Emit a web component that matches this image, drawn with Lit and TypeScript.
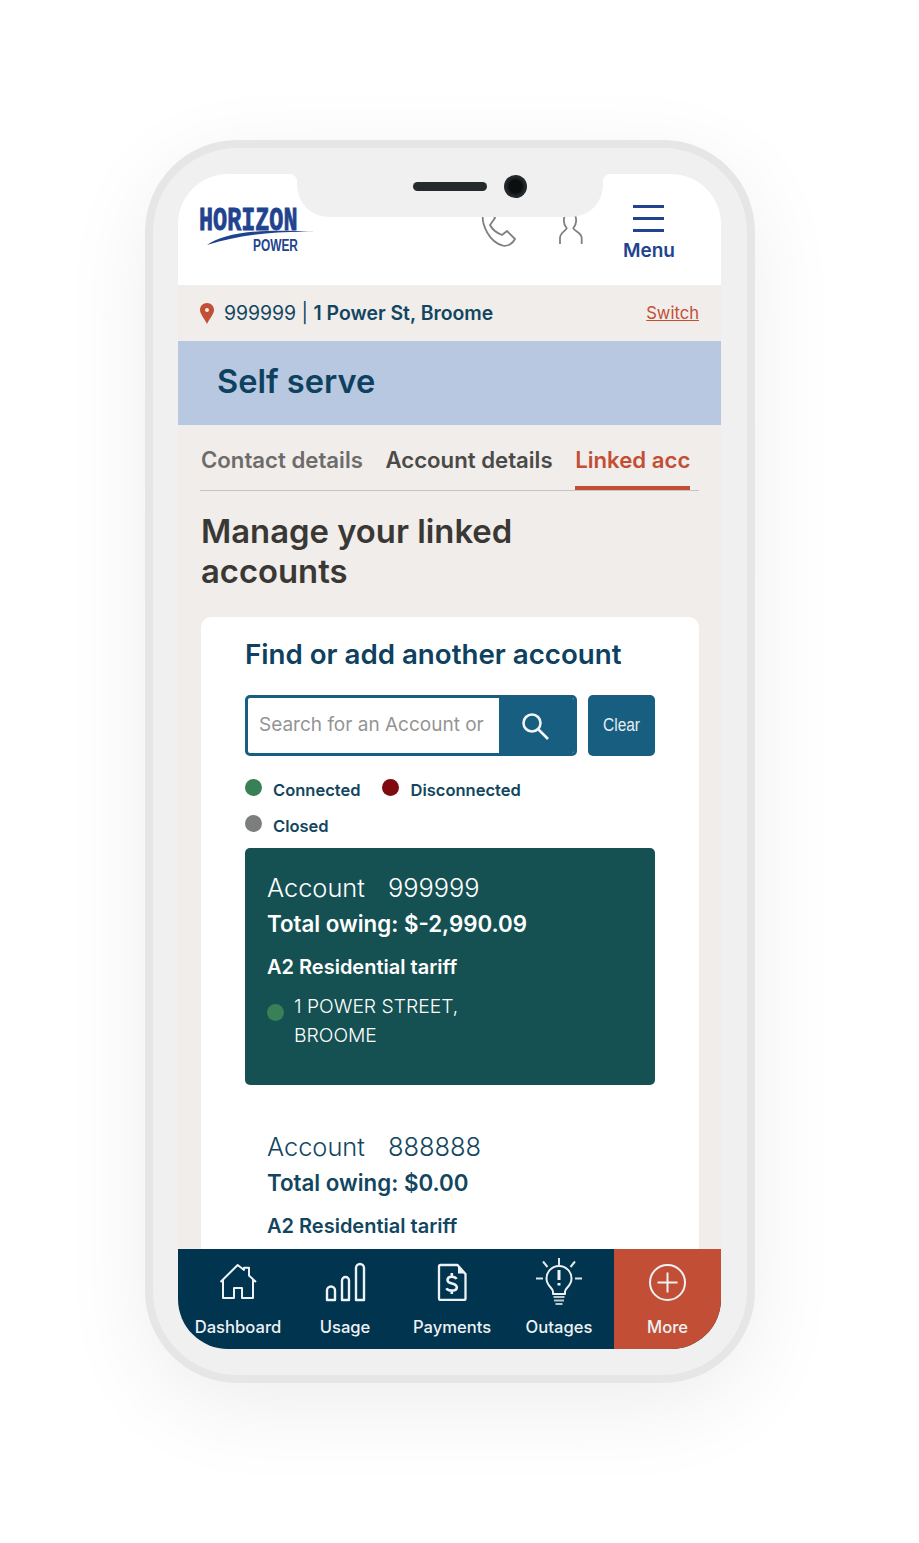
import {LitElement, html, css, svg} from 'lit';
import {customElement} from 'lit/decorators.js';

const navIcons = {
  home: svg`<path d="M1.5 19 L18.7 2 L25 7 V4.7 H30 V12.5 L37 19 M4 16.5 V35 H15 V25 H23 V35 H34 V16.5"/>`,
  usage: svg`<path stroke-width="2.4" d="M2 38 V28.5 A4 4 0 0 1 10 28.5 V38 Z M17 38 V18.5 A3.5 3.5 0 0 1 24 18.5 V38 Z M31 38 V6 A4 4 0 0 1 39 6 V38 Z"/>`,
  bill: svg`<path stroke-width="2.3" d="M3.5 2 H20.5 L28.5 11 V35.5 Q28.5 37 27 37 H3.5 Q2 37 2 35.5 V3.5 Q2 2 3.5 2 Z"/>
    <path fill="#eef2f4" stroke="none" d="M21 3 L28 10.5 H21 Z"/>
    <path stroke-width="2.6" d="M19.5 16 C18 13 10.5 12.6 10.5 17 C10.5 22 19.8 19 19.8 24.5 C19.8 28.5 11 28.5 9.5 25.2 M14.8 10 V13.5 M14.8 27.5 V31"/>`,
  bulb: svg`<path d="M18 36 V33.5 C18 30 11.5 28 11.5 20.5 A12.5 12.5 0 0 1 36.5 20.5 C36.5 28 30 30 30 33.5 V36 Z"/>
    <path stroke="#dfe6e9" d="M24 0 V8 M8 3.5 L12.5 9 M40 3.5 L35.5 9 M1 20.5 H8 M40 20.5 H47"/>
    <path stroke-width="3" d="M24 12 V22 M24 25 V27.5"/>
    <path stroke="#b9c8cc" stroke-width="2.2" d="M18.5 39 H29.5 M19 42.5 H29 M20.5 46 H27.5"/>`,
  plus: svg`<circle cx="18.5" cy="18.5" r="17.5"/><path d="M18.5 8.5 V28.5 M8.5 18.5 H28.5"/>`,
};

@customElement('app-root')
export class AppRoot extends LitElement {
  static override styles = css`
    :host {
      display: block;
      height: 1543px;
      padding: 140px 0 0 145px;
      box-sizing: border-box;
      background: #fff;
      font-family: Inter, 'Liberation Sans', sans-serif;
      overflow: hidden;
    }

    .phone {
      position: relative;
      width: 610px;
      height: 1243px;
      box-sizing: border-box;
      padding: 26px 26px 26px 25px;
      background: #f0f0f0;
      border: 8px solid #e6e6e6;
      border-radius: 92px;
      box-shadow: 0 24px 90px rgba(0, 0, 0, 0.07);
    }

    .side {
      position: absolute;
      width: 4px;
      background: #f6f6f6;
    }

    .side.a { left: -12px; top: 160px; height: 48px; }
    .side.b { left: -12px; top: 247px; height: 92px; }
    .side.c { left: -12px; top: 362px; height: 90px; }
    .side.d { right: -12px; top: 277px; height: 150px; }

    .screen {
      position: relative;
      width: 543px;
      height: 1175px;
      overflow: hidden;
      border-radius: 50px;
      background: #f1edea;
    }

    .notch {
      position: absolute;
      z-index: 3;
      top: 0;
      left: 119px;
      width: 306px;
      height: 43px;
      background: #f0f0f0;
      border-radius: 0 0 32px 32px;
      display: flex;
      align-items: center;
      justify-content: center;
      gap: 17px;
      box-sizing: border-box;
      padding: 0 0 18px 40px;
    }

    .notch::before,
    .notch::after {
      content: '';
      position: absolute;
      top: 0;
      width: 8px;
      height: 8px;
    }

    .notch::before {
      left: -8px;
      background: radial-gradient(circle at 0 100%, transparent 8px, #f0f0f0 8.5px);
    }

    .notch::after {
      right: -8px;
      background: radial-gradient(circle at 100% 100%, transparent 8px, #f0f0f0 8.5px);
    }

    .speaker {
      width: 74px;
      height: 9px;
      border-radius: 5px;
      background: #252a2c;
    }

    .camera {
      width: 23px;
      height: 23px;
      border-radius: 50%;
      background: radial-gradient(circle at 50% 50%, #0c0f10 0 38%, #23292b 60%);
    }

    .header {
      height: 111px;
      background: #fff;
      display: flex;
      box-sizing: border-box;
      padding: 30px 46px 0 20px;
    }

    .logo {
      width: 122px;
      height: 56px;
      flex: none;
      fill: #21438f;
      overflow: visible;
    }

    .logo text {
      font-weight: 700;
    }

    .logo .word {
      font-family: 'Liberation Mono', monospace;
      stroke: #21438f;
      stroke-width: 0.9;
    }

    .logo .sub {
      font-family: 'Liberation Sans', sans-serif;
    }

    .header-icons {
      margin-left: auto;
      display: flex;
      align-items: flex-start;
    }

    .header-icons svg {
      fill: none;
      stroke: #808080;
      stroke-width: 1.8;
    }

    .phone-icon {
      margin: 11px 41px 0 0;
    }

    .person-icon {
      margin: 11px 39px 0 0;
    }

    .menu {
      display: flex;
      flex-direction: column;
      align-items: center;
      color: #21438f;
      font-size: 19px;
      font-weight: 600;
      line-height: 22px;
      margin-top: 1px;
    }

    .burger {
      width: 31px;
      height: 27px;
      margin-bottom: 8px;
      border-top: 3px solid #21438f;
      border-bottom: 3px solid #21438f;
      box-sizing: border-box;
      position: relative;
    }

    .burger::after {
      content: '';
      position: absolute;
      left: 0;
      right: 0;
      top: 9px;
      height: 3px;
      background: #21438f;
    }

    .address {
      height: 56px;
      display: flex;
      align-items: center;
      box-sizing: border-box;
      padding: 0 22px;
      color: #124660;
      font-size: 19.4px;
    }

    .address svg {
      margin-right: 10px;
    }

    .address b {
      font-weight: 600;
    }

    .switch {
      margin-left: auto;
      color: #c24f35;
      font-size: 16.6px;
      text-decoration: underline;
    }

    .banner {
      height: 84px;
      display: flex;
      align-items: center;
      box-sizing: border-box;
      padding: 0 0 5px 39px;
      background: #b9c8e1;
      color: #0e4160;
      font-size: 32.6px;
      font-weight: 600;
    }

    .tabs {
      margin: 0 22px;
      padding-left: 1px;
      height: 66px;
      display: flex;
      gap: 22.5px;
      border-bottom: 1px solid #c4c4c4;
      box-sizing: border-box;
      font-size: 22.2px;
      font-weight: 600;
      white-space: nowrap;
    }

    .tab {
      padding-top: 21px;
      color: #4a4a48;
    }

    .tab.first {
      color: #6d6c6a;
    }

    .tab.active {
      color: #c24f35;
      border-bottom: 4px solid #c24f35;
      height: 65px;
      box-sizing: border-box;
    }

    h1 {
      margin: 21px 22px 26px 23px;
      color: #3a3835;
      font-size: 32.8px;
      font-weight: 600;
      line-height: 39.5px;
    }

    .card {
      margin: 0 22px 0 23px;
      padding: 20px 44px 0;
      height: 700px;
      box-sizing: border-box;
      background: #fff;
      border-radius: 10px;
    }

    h2 {
      margin: 0 0 24px;
      color: #0e4160;
      font-size: 27.7px;
      font-weight: 600;
      line-height: 34px;
    }

    .search-row {
      display: flex;
      gap: 11px;
      height: 61px;
    }

    .search {
      width: 332px;
      display: flex;
      box-sizing: border-box;
      border: 3px solid #175e81;
      border-radius: 5px;
      overflow: hidden;
    }

    .field {
      flex: 1;
      padding-left: 11px;
      color: #949494;
      font-size: 19px;
      line-height: 54px;
      white-space: nowrap;
      overflow: hidden;
    }

    .search-btn {
      width: 75px;
      flex: none;
      display: flex;
      align-items: center;
      justify-content: center;
      padding-right: 4px;
      box-sizing: border-box;
      background: #175e81;
    }

    .clear {
      width: 67px;
      display: flex;
      align-items: center;
      justify-content: center;
      border-radius: 5px;
      background: #175e81;
      color: #e6eef2;
      font-family: 'Liberation Sans', sans-serif;
      font-size: 18px;
    }

    .clear span {
      display: inline-block;
      transform: scaleX(0.86);
    }

    .legend {
      display: flex;
      flex-wrap: wrap;
      gap: 0 22px;
      width: 340px;
      margin-top: 16px;
      color: #124660;
      font-size: 16.5px;
      font-weight: 600;
    }

    .legend-item {
      display: flex;
      gap: 11px;
      height: 36px;
      line-height: 36px;
    }

    .dot {
      width: 17px;
      height: 17px;
      border-radius: 50%;
      flex: none;
      margin-top: 7px;
    }

    .account {
      padding: 22px 22px 0;
      height: 237px;
      box-sizing: border-box;
      color: #124660;
      margin-bottom: 22px;
    }

    .legend + .account {
      margin-top: 4px;
    }

    .account.selected {
      background: #155153;
      border-radius: 5px;
      color: #fff;
    }

    .acc-title {
      display: flex;
      gap: 23px;
      font-size: 25.4px;
      font-weight: 300;
      line-height: 36px;
    }

    .owing {
      font-size: 22.3px;
      font-weight: 600;
      line-height: 36px;
    }

    .tariff {
      margin-top: 7px;
      font-size: 20px;
      font-weight: 600;
      line-height: 36px;
    }

    .place {
      display: flex;
      gap: 10px;
      margin-top: 7px;
      font-size: 19.3px;
      line-height: 29px;
      font-weight: 300;
      width: 240px;
    }

    .place .dot {
      margin-top: 12px;
    }

    .nav {
      position: absolute;
      z-index: 2;
      left: 0;
      right: 0;
      bottom: 0;
      height: 100px;
      display: flex;
      box-sizing: border-box;
      padding-left: 6.5px;
      background: #01344f;
      color: #eef2f4;
      font-size: 16.6px;
      font-weight: 500;
    }

    .nav-item {
      display: flex;
      flex-direction: column;
      align-items: center;
      width: 107px;
      flex: none;
    }

    .nav-item.more {
      margin-left: auto;
      background: #c24f35;
    }

    .nav-icon {
      height: 50px;
      margin-top: 8px;
      display: flex;
      align-items: center;
    }

    .nav-icon svg {
      fill: none;
      stroke: #eef2f4;
      stroke-width: 2;
      stroke-linejoin: round;
    }

    .nav-label {
      line-height: 20px;
      margin-top: 10px;
      white-space: nowrap;
    }
  `;

  private renderAccount(num: string, owing: string, selected: boolean) {
    return html`
      <div class="account ${selected ? 'selected' : ''}">
        <div class="acc-title"><span>Account</span><span>${num}</span></div>
        <div class="owing">Total owing: ${owing}</div>
        <div class="tariff">A2 Residential tariff</div>
        <div class="place">
          <span class="dot" style="background:#398057"></span>
          <span>1 POWER STREET, BROOME</span>
        </div>
      </div>
    `;
  }

  private renderNav(label: string, icon: unknown, w: number, h: number, cls = '') {
    return html`
      <div class="nav-item ${cls}">
        <div class="nav-icon">
          <svg width=${w} height=${h} viewBox="0 0 ${w} ${h}">${icon}</svg>
        </div>
        <div class="nav-label">${label}</div>
      </div>
    `;
  }

  override render() {
    return html`
      <div class="phone">
        <div class="side a"></div>
        <div class="side b"></div>
        <div class="side c"></div>
        <div class="side d"></div>
        <div class="screen">
          <div class="notch">
            <span class="speaker"></span>
            <span class="camera"></span>
          </div>
          <div class="header">
            <svg class="logo" viewBox="0 0 122 56">
              <text class="word" transform="translate(1 26) scale(0.69 1)" font-size="34">HORIZON</text>
              <path d="M9 41 C25 30 55 24 118 28 C75 27 42 31 9 41 Z"/>
              <text class="sub" transform="translate(55 47) scale(0.7 1)" font-size="17">POWER</text>
            </svg>
            <div class="header-icons">
              <svg class="phone-icon" width="36" height="34" viewBox="0 0 36 34">
                <path d="M1.7 0 C1 10 8 27 22 30.7 C27 31.5 32 28 34 24 L26 16 L21 20 C16 18 11 14 9 10 L14 3 L12 0"/>
              </svg>
              <svg class="person-icon" width="26" height="30" viewBox="0 0 26 30">
                <path d="M7 0 C5 5 6 10 8.7 13.3 C7 16.5 2 18 2 23 V29 M17 0 C19 5 18 10 15.3 13.3 C17 16.5 23.7 18 23.7 23 V29"/>
              </svg>
              <div class="menu">
                <div class="burger"></div>
                Menu
              </div>
            </div>
          </div>
          <div class="address">
            <svg width="14" height="21" viewBox="0 0 14 21">
              <path fill="#c24f35" fill-rule="evenodd" d="M7 0 C11 0 14 3 14 7 C14 11 10 15 7 21 C4 15 0 11 0 7 C0 3 3 0 7 0 Z M7 5 A2 2 0 1 0 7 9 A2 2 0 1 0 7 5 Z"/>
            </svg>
            <span>999999 | <b>1 Power St, Broome</b></span>
            <span class="switch">Switch</span>
          </div>
          <div class="banner">Self serve</div>
          <div class="tabs">
            <div class="tab first">Contact details</div>
            <div class="tab">Account details</div>
            <div class="tab active">Linked acc</div>
          </div>
          <h1>Manage your linked<br />accounts</h1>
          <div class="card">
            <h2>Find or add another account</h2>
            <div class="search-row">
              <div class="search">
                <div class="field">Search for an Account or</div>
                <div class="search-btn">
                  <svg width="28" height="28" viewBox="0 0 28 28" fill="none" stroke="#f2f6f8" stroke-width="2.6">
                    <circle cx="11" cy="11" r="8.5"/>
                    <path d="M17 17 L27 27"/>
                  </svg>
                </div>
              </div>
              <div class="clear"><span>Clear</span></div>
            </div>
            <div class="legend">
              <div class="legend-item"><span class="dot" style="background:#398057"></span>Connected</div>
              <div class="legend-item"><span class="dot" style="background:#7f0a0f"></span>Disconnected</div>
              <div class="legend-item"><span class="dot" style="background:#7c7e7e"></span>Closed</div>
            </div>
            ${this.renderAccount('999999', '$-2,990.09', true)}
            ${this.renderAccount('888888', '$0.00', false)}
          </div>
          <div class="nav">
            ${this.renderNav('Dashboard', navIcons.home, 38, 38)}
            ${this.renderNav('Usage', navIcons.usage, 41, 40)}
            ${this.renderNav('Payments', navIcons.bill, 30, 38)}
            ${this.renderNav('Outages', navIcons.bulb, 48, 48)}
            ${this.renderNav('More', navIcons.plus, 37, 37, 'more')}
          </div>
        </div>
      </div>
    `;
  }
}

declare global {
  interface HTMLElementTagNameMap {
    'app-root': AppRoot;
  }
}
